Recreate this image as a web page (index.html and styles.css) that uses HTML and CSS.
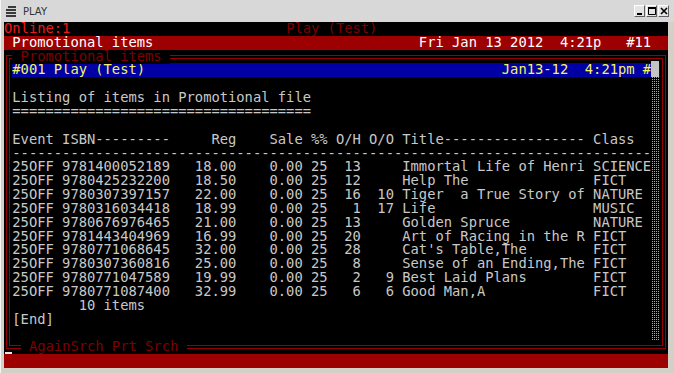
FILE: index.html
```html
<!DOCTYPE html>
<html lang="en">

<head>
    <meta charset="UTF-8">
    <meta name="viewport" content="width=device-width, initial-scale=1.0">
    <title>PLAY</title>
    <link rel="stylesheet" href="styles.css">
</head>

<body>
    <div class="window">
        <div class="titlebar">
            <svg class="app-icon" width="12" height="12" viewBox="0 0 12 12">
                <path d="M3 1h8v2H3zM1 4h10v2H1zM1 7h10v2H1zM1 10h10v2H1z" fill="#3a3a3a" />
            </svg>
            <span class="title">PLAY</span>
            <div class="controls">
                <span class="btn"><svg width="8" height="8" viewBox="0 0 8 8"><path d="M1 6h5v2H1z" fill="#000" /></svg></span>
                <span class="btn"><svg width="8" height="8" viewBox="0 0 8 8"><path d="M0.5 1.5h7v6h-7z" fill="none" stroke="#000" /><path d="M0 0h8v2H0z" fill="#000" /></svg></span>
                <span class="btn"><svg width="8" height="8" viewBox="0 0 8 8"><path d="M1 1l6 6M7 1l-6 6" stroke="#000" stroke-width="1.6" /></svg></span>
            </div>
        </div>

        <div class="screen">
            <div class="row status"><span class="online">Online:1</span>                          <span class="dim">Play (Test)</span></div>
            <div class="row bar"> Promotional items                                Fri Jan 13 2012  4:21p   #11</div>

            <!-- framed report window -->
            <div class="frame">
                <span class="frame-title"> Promotional items </span>
                <div class="row hilite">#001 Play (Test)                                           Jan13-12  4:21pm #<span class="cursor"> </span></div>
                <div class="body">
<pre class="report">

Listing of items in Promotional file
====================================

Event ISBN---------     Reg    Sale %% O/H O/O Title----------------- Class
-----------------------------------------------------------------------------
25OFF 9781400052189   18.00    0.00 25  13     Immortal Life of Henri SCIENCE
25OFF 9780425232200   18.50    0.00 25  12     Help The               FICT
25OFF 9780307397157   22.00    0.00 25  16  10 Tiger  a True Story of NATURE
25OFF 9780316034418   18.99    0.00 25   1  17 Life                   MUSIC
25OFF 9780676976465   21.00    0.00 25  13     Golden Spruce          NATURE
25OFF 9781443404969   16.99    0.00 25  20     Art of Racing in the R FICT
25OFF 9780771068645   32.00    0.00 25  28     Cat's Table,The        FICT
25OFF 9780307360816   25.00    0.00 25   8     Sense of an Ending,The FICT
25OFF 9780771047589   19.99    0.00 25   2   9 Best Laid Plans        FICT
25OFF 9780771087400   32.99    0.00 25   6   6 Good Man,A             FICT
        10 items
[End]
</pre>
                    <div class="scroll"></div>
                </div>
                <span class="frame-keys"> AgainSrch Prt Srch </span>
                <span class="caret"></span>
            </div>

            <div class="row bar"></div>
        </div>
    </div>
</body>

</html>
```

FILE: styles.css
```css
* {
    margin: 0;
    padding: 0;
    box-sizing: border-box;
}

body {
    background: #d4d0c8;
}

.window {
    width: 674px;
    height: 373px;
    display: flex;
    flex-direction: column;
    background: #d4d0c8;
    border-left: 1px solid #f4f4f4;
}

/* title bar */
.titlebar {
    height: 22px;
    display: flex;
    align-items: center;
    gap: 6px;
    padding: 0 5px 0 4px;
    background: #d8d8d8;
}

.title {
    font-family: "DejaVu Sans", sans-serif;
    font-size: 10px;
    color: #333;
}

.controls {
    margin-left: auto;
    display: flex;
    gap: 1px;
}

.btn {
    width: 11px;
    height: 12px;
    display: flex;
    align-items: center;
    justify-content: center;
    background: #e4e4e4;
    border: 1px solid;
    border-color: #fff #606060 #606060 #fff;
}

/* terminal */
.screen {
    margin: 0 6px 0 3px;
    background: #000;
    color: #c8c8c8;
    font-family: "DejaVu Sans Mono", monospace;
    font-size: 13.79px;
    line-height: 13.85px;
}

.row {
    height: 13.85px;
    white-space: pre;
}

.online {
    color: #f01818;
}

.dim {
    color: #7e0000;
}

.bar {
    background: #9c0000;
    color: #fff;
}

.frame {
    position: relative;
    margin: 4.9px 2px;
    border: 4px double #960000;
    padding: 4.9px 2.3px;
}

.frame-title,
.frame-keys {
    position: absolute;
    background: #000;
    color: #7e0000;
    white-space: pre;
}

.frame-title {
    top: -8.9px;
    left: 2.3px;
}

.frame-keys {
    bottom: -8.95px;
    left: 10.6px;
}

.caret {
    position: absolute;
    bottom: -8.5px;
    left: -5px;
    width: 7px;
    height: 2px;
    background: #e8e8e8;
}

.hilite {
    background: #0000a4;
    color: #f4f463;
}

.cursor {
    background: #c4c4c4;
}

.body {
    display: flex;
}

.report {
    flex: 1;
    font: inherit;
    height: calc(13.85px * 19);
}

.scroll {
    width: 8.3px;
    background: conic-gradient(#a8a8a8 0 25%, transparent 0 100%);
    background-size: 2px 2px;
}
```
